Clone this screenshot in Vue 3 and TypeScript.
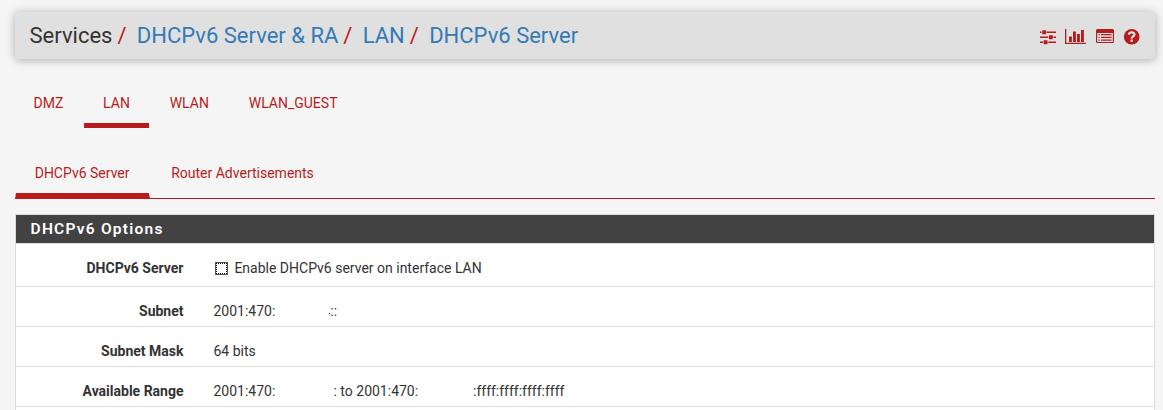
<script setup lang="ts">
interface Crumb { text: string; link: boolean }
interface Part { text: string; width?: number; speck?: boolean }
interface Row { label: string; parts: Part[] }

const crumbs: Crumb[] = [
  { text: 'Services', link: false },
  { text: 'DHCPv6 Server & RA', link: true },
  { text: 'LAN', link: true },
  { text: 'DHCPv6 Server', link: true },
]
const interfaces: string[] = ['DMZ', 'LAN', 'WLAN', 'WLAN_GUEST']
const activeInterface = 'LAN'
const pages: string[] = ['DHCPv6 Server', 'Router Advertisements']
const activePage = 'DHCPv6 Server'
const rows: Row[] = [
  { label: 'Subnet', parts: [{ text: '2001:470:', width: 115 }, { text: '::', speck: true }] },
  { label: 'Subnet Mask', parts: [{ text: '64 bits' }] },
  {
    label: 'Available Range',
    parts: [
      { text: '2001:470:', width: 120 },
      { text: ': to 2001:470:', width: 139.5 },
      { text: ':ffff:ffff:ffff:ffff' },
    ],
  },
]
</script>

<template>
  <div class="page">
    <header class="header">
      <nav class="crumbs">
        <template v-for="(c, i) in crumbs" :key="i">
          <span v-if="i > 0" class="slash">/</span>
          <a v-if="c.link" class="crumb-link">{{ c.text }}</a>
          <span v-else>{{ c.text }}</span>
        </template>
      </nav>
      <div class="icons">
        <svg width="16" height="16" viewBox="0 0 16 16">
          <path d="M0 2.5h16V4H0zM0 7.5h16V9H0zM0 12.5h16V14H0z" />
          <path class="halo" d="M1.5 1h5.3v4.5H1.5zM8.2 6h5.3v4.5H8.2zM3 11h5.3v4.5H3z" />
          <rect x="2.2" y="1.3" width="4" height="3.9" rx=".6" />
          <rect x="8.9" y="6.3" width="4" height="3.9" rx=".6" />
          <rect x="3.6" y="11.3" width="4" height="3.9" rx=".6" />
        </svg>
        <svg class="chart" width="21" height="16" viewBox="0 0 21 16">
          <path d="M0 0h1.3v13.8H21V15H0zM4 7.5h2.9V13H4zM8 2.500h2.900V13H8zM12 5h2.900v8H12zM16 1h2.900v12H16z" />
        </svg>
        <svg class="list" width="18" height="16" viewBox="0 0 18 16">
          <path fill-rule="evenodd" d="M1.5 0h15A1.5 1.5 0 0 1 18 1.5v11a1.5 1.5 0 0 1-1.5 1.5h-15A1.5 1.5 0 0 1 0 12.5v-11A1.5 1.5 0 0 1 1.5 0zM1.2 4v8.5q0 .4.4.4h14.8q.4 0 .4-.4V4z" />
          <path d="M2.500 5h1.200v1.200H2.500zM5 5h10.600v1.200H5zM2.500 7.800h1.200V9H2.500zM5 7.800h10.600V9H5zM2.500 10.600h1.200v1.200H2.500zM5 10.600h10.600v1.200H5z" />
        </svg>
        <svg class="help" width="16" height="16" viewBox="0 0 16 16">
          <circle cx="7.700" cy="7.700" r="7.800" />
          <path class="mark" d="M4.800 5.700C5.200 2.600 10.400 2.700 10.400 5.500C10.400 7.400 7.700 7.300 7.700 9.400" />
          <rect class="dot" x="6.500" y="10.500" width="2.400" height="2.300" />
        </svg>
      </div>
    </header>

    <ul class="pills">
      <li v-for="t in interfaces" :key="t" :class="{ active: t === activeInterface }">{{ t }}</li>
    </ul>

    <ul class="tabs">
      <li v-for="t in pages" :key="t" :class="{ active: t === activePage }">{{ t }}</li>
    </ul>

    <section class="panel">
      <h2>DHCPv6 Options</h2>
      <div class="row first">
        <span class="label">DHCPv6 Server</span>
        <label class="value check"><span class="box"><i></i></span>Enable DHCPv6 server on interface LAN</label>
      </div>
      <div v-for="r in rows" :key="r.label" class="row">
        <span class="label">{{ r.label }}</span>
        <span class="value">
          <span v-for="(p, i) in r.parts" :key="i" :class="{ speck: p.speck }" :style="p.width ? { width: p.width + 'px' } : undefined">{{ p.text }}</span>
        </span>
      </div>
      <div class="row"></div>
    </section>
  </div>
</template>

<style>
body { background: #f5f5f5; overflow: hidden; }
</style>

<style scoped>
.page {
  box-sizing: border-box;
  height: 410px;
  overflow: hidden;
  padding: 12px 8px 0 15px;
  font: 14px/20px Roboto, sans-serif;
  color: #333;
}
.header {
  display: flex;
  justify-content: space-between;
  height: 47px;
  width: 1140px;
  background: #e0e0e0;
  border-radius: 4px;
  box-shadow: 0 1px 10px rgba(0, 0, 0, .3);
}
.crumbs {
  display: flex;
  padding-left: 14.5px;
  font-size: 22px;
  line-height: 47px;
  white-space: pre;
}
.slash { color: #c3171b; padding: 0 10.3px 0 5px; }
.crumb-link { color: #337ab7; }
.icons {
  display: flex;
  padding: 17px 15px 0 0;
}
.icons svg { display: block; fill: #b71c1c; overflow: visible; }
.icons .halo { fill: #e0e0e0; }
.icons .chart { margin-left: 9px; }
.icons .list { margin-left: 10px; }
.icons .help { margin-left: 10px; }
.icons .mark { fill: none; stroke: #e0e0e0; stroke-width: 2.3; }
.icons .dot { fill: #e0e0e0; }
ul {
  display: flex;
  gap: 2px;
  margin: 0;
  padding: 0;
  list-style: none;
  color: #b71c1c;
}
.pills { margin-top: 24px; }
.pills li { padding: 10px 19px 10px 18.8px; border-bottom: 5px solid transparent; }
.pills li:first-child { padding-left: 18.5px; }
.pills li.active { border-bottom-color: #b71c1c; }
.tabs {
  width: 1140px;
  height: 45px;
  margin-top: 25px;
  border-bottom: 1px solid #b71c1c;
}
.tabs li { height: 20px; padding: 10px 19px 10px 18.7px; border: 1px solid transparent; border-top: 0; border-bottom-width: 6px; }
.tabs li.active { border-bottom-color: #b71c1c; }
.panel {
  box-sizing: border-box;
  width: 1140px;
  margin-top: 15px;
  border: 1px solid #ddd;
  background: #fff;
}
h2 {
  margin: 0;
  height: 28px;
  padding-left: 14.6px;
  background: #424242;
  border-bottom: 1px solid #ddd;
  color: #fff;
  font-size: 15.5px;
  line-height: 29px;
  font-weight: 600;
  letter-spacing: 1.23px;
}
.row {
  display: flex;
  box-sizing: border-box;
  height: 40px;
  padding-top: 14px;
  border-bottom: 1px solid #ddd;
}
.first { height: 43px; }
.label { width: 167.5px; text-align: right; font-weight: 700; }
.value { display: flex; margin-left: 30px; white-space: pre; }
.check { align-items: center; height: 20px; }
.box {
  box-sizing: border-box;
  width: 13px;
  height: 13px;
  margin: 0 6.4px 0 1.5px;
  border: 1px solid #555;
}
.box i { display: block; box-sizing: border-box; width: 11px; height: 11px; border: 1px dotted #000; }
.speck { position: relative; padding-left: 1.8px; }
.speck::before {
  content: "";
  position: absolute;
  left: 0.5px;
  top: 12px;
  width: 1px;
  height: 1px;
  background: #333;
}
</style>
